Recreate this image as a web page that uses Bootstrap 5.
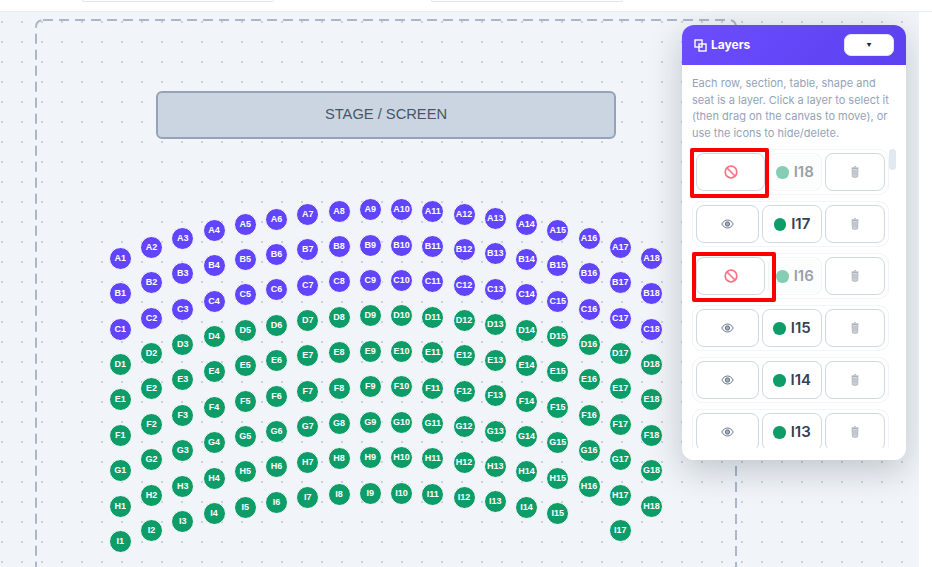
<!DOCTYPE html>
<html lang="en">
<head>
  <meta charset="UTF-8">
  <meta name="viewport" content="width=device-width, initial-scale=1.0">
  <title>Seat map editor</title>
  <link href="https://cdn.jsdelivr.net/npm/bootstrap@5.3.3/dist/css/bootstrap.min.css" rel="stylesheet">
  <style>
    html, body { height: 100%; overflow: hidden; background: #fff; }
    body { font-family: "Inter", "Liberation Sans", sans-serif; }

    .top-strip { height: 12px; padding-left: 82px; gap: 157px; border-bottom: 1px solid #e9edf2; }
    .top-field { width: 192px; height: 2px; background: #fff; border: 1px solid #e2e6ec; border-top: 0; border-radius: 0 0 6px 6px; }

    .canvas-area {
      position: relative;
      width: 919px;
      height: 555px;
      overflow: hidden;
      background-color: #f1f5f9;
      background-image: radial-gradient(circle, #c9d1dc 1px, transparent 1.2px);
      background-size: 20px 20px;
      background-position: -8px 0;
    }
    .venue-frame { position: absolute; left: 0; top: 0; }
    .stage-box {
      position: absolute; left: 156px; top: 79px; width: 460px; height: 48px; padding-bottom: 3px;
      background: #cbd5e1; border: 2px solid #94a3b8; border-radius: 6px;
      font: 14.7px "Liberation Sans", Arial, sans-serif; color: #475569;
    }
    .seat-dot {
      position: absolute; width: 23px; height: 23px; margin: -11.5px 0 0 -11.5px;
      border: 1px solid #fff; border-radius: 50%;
      font: bold 9px/20px "Liberation Sans", Arial, sans-serif; color: #fff; text-align: center;
    }
    .seat-purple { background: #6045fd; }
    .seat-green { background: #0e9c69; }

    .layers-panel {
      position: absolute; left: 682px; top: 13px; width: 224px; height: 435px;
      background: #fff; border-radius: 12px; overflow: hidden;
    }
    .panel-shadow {
      position: absolute; left: 682px; top: 13px; width: 224px; height: 435px; border-radius: 12px;
      box-shadow: 0 10px 34px rgba(15, 23, 42, .22);
    }
    .layers-head {
      height: 40px; padding: 0 12px;
      background: linear-gradient(135deg, #6c4dff, #5b41f0);
      color: #fff; font-size: 12px; font-weight: 700;
    }
    .layers-menu {
      width: 50px; height: 22px; padding: 0; background: #fff;
      border: 1px solid #e2e8f0; border-radius: 7px; color: #1e293b; font-size: 5px; line-height: 20px;
    }
    .layers-help { margin: 10px 10px 8px; font-size: 11px; line-height: 16.6px; color: #94a3b8; }
    .layers-list { height: 299px; padding-left: 10px; gap: 6px; overflow: hidden; }
    .layer-row {
      width: 197px; height: 46px; padding: 3px; gap: 3px; flex-shrink: 0;
      border: 1px solid #f1f4f8; border-radius: 10px;
    }
    .layer-btn {
      height: 38px; padding: 0; background: #fff;
      border: 1px solid #cfd7e3; border-radius: 8px;
    }
    .layer-eye { width: 63px; }
    .layer-name { width: 60px; gap: 5px; color: #334155; font-size: 15px; font-weight: 600; }
    .layer-trash { width: 60px; }
    .layer-swatch { width: 12.5px; height: 12.5px; border-radius: 50%; background: #0e9c69; }
    .is-hidden .layer-eye { width: 69px; }
    .is-hidden .layer-name { width: 54px; opacity: .5; border-color: #e8ecf2; background: #fbfcfd; }
    .list-thumb { position: absolute; left: 207px; top: 124px; width: 7px; height: 21px; background: #e2e8f0; border-radius: 4px; }
    .red-mark { position: absolute; border: 4px solid #f00; border-radius: 2px; pointer-events: none; }
    .mark-one { left: 8px; top: 123px; width: 79px; height: 50px; }
    .mark-two { left: 10px; top: 227px; width: 84px; height: 50px; }
  </style>
</head>
<body>

<div class="top-strip d-flex">
  <div class="top-field"></div>
  <div class="top-field"></div>
</div>

<div class="canvas-area" id="canvas">
  <svg class="venue-frame" width="919" height="555">
    <rect x="36" y="8" width="700" height="640" rx="7" fill="none" stroke="#aab7ca" stroke-width="2" stroke-dasharray="10 6"/>
  </svg>
  <div class="stage-box d-flex align-items-center justify-content-center">STAGE / SCREEN</div>
  <div class="panel-shadow"></div>

  <!-- Layers panel -->
  <div class="layers-panel">
    <div class="layers-head d-flex align-items-center justify-content-between">
      <span class="d-flex align-items-center gap-1">
        <svg width="13" height="13" viewBox="0 0 13 13" fill="none" stroke="#fff" stroke-width="1.4">
          <rect x="1" y="1" width="7" height="7"/>
          <rect x="5" y="5" width="7" height="7"/>
        </svg>
        Layers
      </span>
      <button type="button" class="layers-menu">&#9660;</button>
    </div>
    <p class="layers-help">Each row, section, table, shape and seat is a layer. Click a layer to select it (then drag on the canvas to move), or use the icons to hide/delete.</p>
    <div class="layers-list d-flex flex-column" id="layerList"></div>
    <div class="list-thumb"></div>
    <div class="red-mark mark-one"></div>
    <div class="red-mark mark-two"></div>
  </div>
</div>

<script src="https://cdn.jsdelivr.net/npm/bootstrap@5.3.3/dist/js/bootstrap.bundle.min.js"></script>
<script>
  // seat rows, the arc is the same for every row
  const arc = [0, 11, 20, 28, 34.3, 39.3, 44, 47.3, 48.6, 48.6, 47.3, 44, 39.8, 34.3, 28, 20, 11, 0];
  const rows = 'ABCDEFGHI'.split('');
  const canvas = document.getElementById('canvas');

  rows.forEach((row, r) => {
    arc.forEach((lift, c) => {
      const num = c + 1;
      if (row === 'I' && (num === 16 || num === 18)) return;
      const seat = document.createElement('div');
      seat.className = 'seat-dot ' + (r < 3 ? 'seat-purple' : 'seat-green');
      seat.style.left = (120.3 + c * 31.25) + 'px';
      seat.style.top = (258.3 - 12 - lift + r * 35.42) + 'px';
      seat.textContent = row + num;
      canvas.insertBefore(seat, canvas.querySelector('.panel-shadow'));
    });
  });

  // layer list
  const eyeIcon = '<svg width="13" height="10" viewBox="0 0 13 10" fill="none" stroke="#64748b" stroke-width="1"><path d="M.8 5C2.3 2.4 4.2 1 6.5 1s4.2 1.4 5.7 4c-1.5 2.6-3.4 4-5.700 4S2.300 7.600.8 5z"/><circle cx="6.500" cy="5" r="2.200" fill="#64748b" fill-opacity=".6"/></svg>';
  const blockIcon = '<svg width="14" height="14" viewBox="0 0 14 14" fill="none" stroke="#fb7185" stroke-width="1.700"><circle cx="7" cy="7" r="5.800"/><path d="M3 3l8 8"/></svg>';
  const trashIcon = '<svg width="8" height="12" viewBox="0 0 8 12" fill="#d5d9df" stroke="#a3a9b3" stroke-width=".8"><path d="M1 2.500h6l-.4 8.300q-2.600 1-5.200 0z"/><path d="M.6 1.800h6.800M3 .7h2M3 4v5.500M5 4v5.500" fill="none"/></svg>';
  const list = document.getElementById('layerList');

  [['I18', true], ['I17', false], ['I16', true], ['I15', false], ['I14', false], ['I13', false]].forEach(([name, hidden]) => {
    const row = document.createElement('div');
    row.className = 'layer-row d-flex' + (hidden ? ' is-hidden' : '');
    row.innerHTML =
      '<button type="button" class="layer-btn layer-eye d-flex align-items-center justify-content-center">' + (hidden ? blockIcon : eyeIcon) + '</button>' +
      '<div class="layer-btn layer-name d-flex align-items-center justify-content-center"><span class="layer-swatch"></span>' + name + '</div>' +
      '<button type="button" class="layer-btn layer-trash d-flex align-items-center justify-content-center">' + trashIcon + '</button>';
    list.appendChild(row);
  });
</script>
</body>
</html>
